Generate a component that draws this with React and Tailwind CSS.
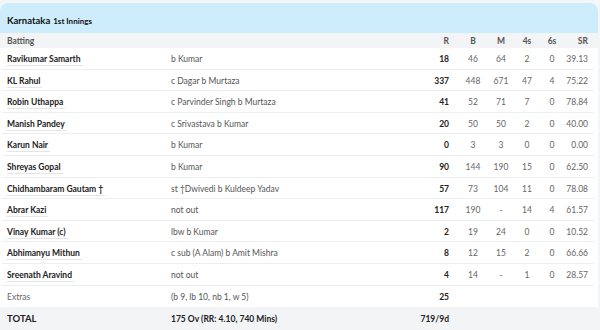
const batters = [
  { name: 'Ravikumar Samarth', how: 'b Kumar', r: '18', b: '46', m: '64', f: '2', s: '0', sr: '39.13' },
  { name: 'KL Rahul', how: 'c Dagar b Murtaza', r: '337', b: '448', m: '671', f: '47', s: '4', sr: '75.22' },
  { name: 'Robin Uthappa', how: 'c Parvinder Singh b Murtaza', r: '41', b: '52', m: '71', f: '7', s: '0', sr: '78.84' },
  { name: 'Manish Pandey', how: 'c Srivastava b Kumar', r: '20', b: '50', m: '50', f: '2', s: '0', sr: '40.00' },
  { name: 'Karun Nair', how: 'b Kumar', r: '0', b: '3', m: '3', f: '0', s: '0', sr: '0.00' },
  { name: 'Shreyas Gopal', how: 'b Kumar', r: '90', b: '144', m: '190', f: '15', s: '0', sr: '62.50' },
  { name: 'Chidhambaram Gautam †', how: 'st †Dwivedi b Kuldeep Yadav', r: '57', b: '73', m: '104', f: '11', s: '0', sr: '78.08' },
  { name: 'Abrar Kazi', how: 'not out', r: '117', b: '190', m: '-', f: '14', s: '4', sr: '61.57' },
  { name: 'Vinay Kumar (c)', how: 'lbw b Kumar', r: '2', b: '19', m: '24', f: '0', s: '0', sr: '10.52' },
  { name: 'Abhimanyu Mithun', how: 'c sub (A Alam) b Amit Mishra', r: '8', b: '12', m: '15', f: '2', s: '0', sr: '66.66' },
  { name: 'Sreenath Aravind', how: 'not out', r: '4', b: '14', m: '-', f: '1', s: '0', sr: '28.57' },
];

function Cells({ r, b, m, f, s, sr, head }) {
  const num = head ? 'text-[#555] font-bold' : 'text-[#666]';
  return (
    <>
      <div className={`w-[50px] text-right ${head ? num : 'font-bold text-[#222]'}`}>{r}</div>
      <div className={`w-[38px] pl-[10px] text-center ${num}`}>{b}</div>
      <div className={`w-[28px] text-center ${num}`}>{m}</div>
      <div className={`w-[24px] text-center ${num}`}>{f}</div>
      <div className={`w-[26px] text-center ${num}`}>{s}</div>
      <div className={`w-[23px] text-right ${num}`}>{sr}</div>
    </>
  );
}

export default function App() {
  return (
    <div className="w-[600px] h-[330px] overflow-hidden bg-[#f4f5f6] pt-[3px] text-[8.5px] leading-none" style={{ fontFamily: 'Lato, "Open Sans", sans-serif' }}>
      <div className="w-[598px] bg-white rounded-t-[8px] overflow-hidden">
        {/* header */}
        <div className="h-[30px] bg-[#cdedfc] flex items-baseline pt-[13px] pl-[7px]">
          <span className="text-[9.5px] font-bold text-[#111]">Karnataka</span>
          <span className="ml-[3px] text-[8px] font-bold text-[#111]">1st Innings</span>
        </div>

        {/* column heads */}
        <div className="h-[15px] bg-[#f3f4f6] flex items-center pt-[1px] pl-[7px] pr-[10px]">
          <div className="w-[164px] font-bold text-[#555]">Batting</div>
          <div className="w-[228px]"></div>
          <Cells head r="R" b="B" m="M" f="4s" s="6s" sr="SR" />
        </div>

        <div className="pl-[2px] pr-[4px]">
          {batters.map((p) => (
            <div key={p.name} className="h-[21.6px] flex items-center pt-[2px] pl-[5px] pr-[6px] border-b border-[#eceef0]">
              <div className="w-[164px]">
                <span className="font-bold text-[#222] border-b border-[#e3e5e8] pb-[1px] pr-[2px]">{p.name}</span>
              </div>
              <div className="w-[228px] text-[#555]">{p.how}</div>
              <Cells {...p} />
            </div>
          ))}
          <div className="h-[21px] flex items-center pt-[2px] pl-[5px] pr-[6px]">
            <div className="w-[164px] text-[#666]">Extras</div>
            <div className="w-[228px] text-[#555]">(b 9, lb 10, nb 1, w 5)</div>
            <div className="w-[50px] text-right font-bold text-[#222]">25</div>
          </div>
        </div>

        <div className="h-[23px] bg-[#f3f4f6] flex items-center pt-[2px] pl-[7px] pr-[10px]">
          <div className="w-[164px] text-[9.5px] font-bold text-[#222]">TOTAL</div>
          <div className="w-[228px] font-bold text-[#222]">175 Ov (RR: 4.10, 740 Mins)</div>
          <div className="w-[50px] text-right font-bold text-[#222]">719/9d</div>
        </div>
      </div>
    </div>
  );
}
